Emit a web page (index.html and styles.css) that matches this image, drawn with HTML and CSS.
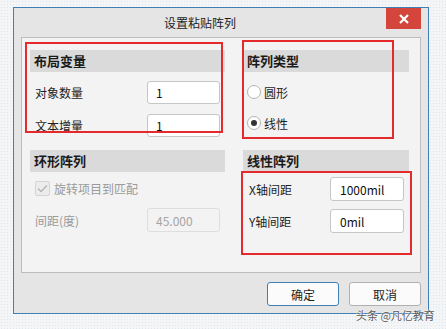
FILE: index.html
```html
<!DOCTYPE html>
<html lang="zh">
<head>
<meta charset="UTF-8">
<title>设置粘贴阵列</title>
<link rel="stylesheet" href="styles.css">
</head>
<body>

<div class="dialog">
    <div class="titlebar">
        <span class="title">设置粘贴阵列</span>
        <span class="close">
            <svg width="10" height="10" viewBox="0 0 10 10"><path d="M1 1L9 9M9 1L1 9" stroke="#fff" stroke-width="2.2"/></svg>
        </span>
    </div>

    <div class="panel">
        <div class="grid">
            <div class="group">
                <div class="group-head">布局变量</div>
                <div class="fields">
                    <div class="field"><span class="label">对象数量</span><span class="input">1</span></div>
                    <div class="field"><span class="label">文本增量</span><span class="input">1</span></div>
                </div>
            </div>

            <div class="group">
                <div class="group-head">阵列类型</div>
                <div class="radios">
                    <div class="radio"><span class="dot"></span>圆形</div>
                    <div class="radio"><span class="dot on"></span>线性</div>
                </div>
            </div>

            <div class="group">
                <div class="group-head">环形阵列</div>
                <div class="check disabled">
                    <span class="box"><svg width="11" height="9" viewBox="0 0 11 9"><path d="M1 4.5L4 7.5L10 1.5" fill="none" stroke="#b5b5b5" stroke-width="1.3"/></svg></span>
                    旋转项目到匹配
                </div>
                <div class="field disabled spaced"><span class="label">间距(度)</span><span class="input">45.000</span></div>
            </div>

            <div class="group">
                <div class="group-head">线性阵列</div>
                <div class="fields tight">
                    <div class="field wide"><span class="label">X轴间距</span><span class="input">1000mil</span></div>
                    <div class="field wide"><span class="label">Y轴间距</span><span class="input">0mil</span></div>
                </div>
            </div>
        </div>

        <!-- red annotation frames -->
        <div class="mark mark-a"></div>
        <div class="mark mark-b"></div>
        <div class="mark mark-c"></div>
    </div>

    <div class="footer">
        <button class="btn primary">确定</button>
        <button class="btn">取消</button>
    </div>
</div>

<div class="watermark">头条 @凡亿教育</div>

</body>
</html>
```

FILE: styles.css
```css
body {
    margin: 0;
    width: 446px;
    height: 329px;
    overflow: hidden;
    position: relative;
    font-family: "Noto Sans CJK SC", "Noto Sans", sans-serif;
    font-size: 12px;
    color: #1e1e1e;
    background-color: #f3f5f7;
    background-image: radial-gradient(#e2e6ea 0.8px, transparent 0.9px);
    background-size: 3px 3px;
}
.dialog {
    margin: 7px 0 0 13px;
    width: 416px;
    height: 307px;
    box-sizing: border-box;
    border: 1px solid #3f7fb4;
    background: #e5e5e5;
    display: flex;
    flex-direction: column;
}
.titlebar {
    height: 29px;
    display: flex;
    align-items: flex-start;
}
.title {
    flex: 1;
    text-align: center;
    line-height: 29px;
    font-size: 12px;
    color: #222;
}
.close {
    width: 35px;
    height: 21px;
    margin-right: 7px;
    background: #d4463b;
    display: flex;
    align-items: center;
    justify-content: center;
}
.panel {
    position: relative;
    margin: 0 7px;
    height: 236px;
    box-sizing: border-box;
    border: 1px solid #bdbdbd;
    background: #f3f3f3;
}
.grid {
    display: grid;
    grid-template-columns: 195px 166px;
    grid-template-rows: 100px auto;
    column-gap: 18px;
    padding: 12px 11px 0 8px;
}
.group-head {
    height: 22px;
    line-height: 22px;
    padding-left: 4px;
    background: #dadada;
    font-size: 13px;
    font-weight: bold;
    color: #1a1a1a;
}
.fields {
    display: flex;
    flex-direction: column;
    gap: 10px;
    margin-top: 9px;
}
.fields.tight {
    gap: 8px;
    margin-top: 5px;
}
.field {
    display: flex;
    align-items: center;
    height: 23px;
    padding: 0 5px;
}
.field.wide {
    height: 24px;
    padding-left: 6px;
}
.label {
    flex: 1;
}
.input {
    width: 73px;
    height: 100%;
    box-sizing: border-box;
    border: 1px solid #c6c6c6;
    border-radius: 3px;
    background: #fff;
    padding-left: 8px;
    display: flex;
    align-items: center;
    font-size: 12px;
    color: #111;
}
.field.wide .input {
    width: 74px;
    padding-left: 9px;
}
.field.spaced {
    margin-top: 13px;
    height: 24px;
}
.disabled {
    color: #9a9a9a;
}
.disabled .input {
    background: #f3f3f3;
    border-color: #dedede;
    color: #a5a5a5;
}
.radios {
    display: flex;
    flex-direction: column;
    gap: 11px;
    margin-top: 10px;
}
.radio {
    height: 20px;
    display: flex;
    align-items: center;
    gap: 3px;
    padding-left: 4px;
}
.dot {
    width: 12px;
    height: 12px;
    border: 1px solid #b4b4b4;
    border-radius: 50%;
    background: #fff;
    display: flex;
    align-items: center;
    justify-content: center;
}
.dot.on::after {
    content: "";
    width: 6px;
    height: 6px;
    border-radius: 50%;
    background: #333;
}
.check {
    margin-top: 9px;
    height: 14px;
    display: flex;
    align-items: center;
    gap: 4px;
    padding-left: 5px;
    font-size: 12px;
}
.box {
    width: 13px;
    height: 13px;
    border: 1px solid #d4d4d4;
    border-radius: 2px;
    background: #ececec;
    display: flex;
    align-items: center;
    justify-content: center;
}
.footer {
    flex: 1;
    display: flex;
    justify-content: flex-end;
    align-items: flex-start;
    gap: 10px;
    padding: 9px 7px 0 0;
}
.btn {
    width: 72px;
    height: 24px;
    border: 1px solid #b0b0b0;
    border-radius: 3px;
    background: #fbfbfb;
    font-family: inherit;
    font-size: 12px;
    color: #1e1e1e;
    padding: 0;
}
.btn.primary {
    border-color: #3f7fb4;
}
.mark {
    position: absolute;
    box-sizing: border-box;
    border: 2px solid #e42a2c;
}
.mark-a {
    left: 3px;
    top: 4px;
    width: 198px;
    height: 91px;
}
.mark-b {
    left: 220px;
    top: 2px;
    width: 152px;
    height: 99px;
}
.mark-c {
    left: 219px;
    top: 133px;
    width: 171px;
    height: 84px;
}
.watermark {
    position: absolute;
    left: 356px;
    top: 307px;
    font-size: 11px;
    color: #5a5a5a;
    text-shadow: 0 0 2px #fff, 0 0 2px #fff;
}
```
